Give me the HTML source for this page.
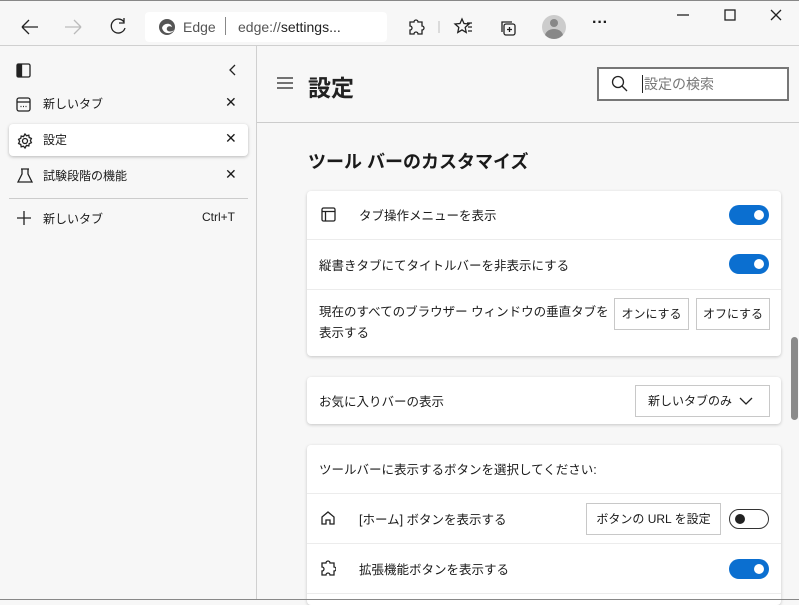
<!DOCTYPE html>
<html><head><meta charset="utf-8"><style>
*{box-sizing:border-box;margin:0;padding:0}
body{width:799px;height:600px;overflow:hidden;background:#f7f7f7;font-family:"Liberation Sans","Noto Sans CJK JP",sans-serif;color:#1a1a1a;position:relative;font-size:13px}
.abs{position:absolute}
.top{left:0;top:0;width:799px;height:46px;background:#f7f7f7;border-top:1px solid #888;border-bottom:1px solid #d0d0d0}
.addr{left:145px;top:12px;width:242px;height:30px;background:#fff;border-radius:4px}
.side{left:0;top:46px;width:257px;height:554px;background:#f7f7f7;border-right:1px solid #d0d0d0}
.si{position:absolute;left:0;width:257px;height:32px;font-size:12px}
.si .t{position:absolute;left:43px;top:7px}
.si .x{position:absolute;left:225px;top:6px;font-size:14px}
.card{position:absolute;left:307px;width:474px;background:#fff;border-radius:4px;box-shadow:0 1px 3px rgba(0,0,0,.2)}
.row{position:relative;border-top:1px solid #ececec}
.tg{position:absolute;width:40px;height:20px;border-radius:10px;background:#0b6fd0}
.tg::after{content:"";position:absolute;right:5px;top:5px;width:10px;height:10px;border-radius:50%;background:#fff}
.tg.off{background:#fff;border:1px solid #333}
.tg.off::after{left:5px;right:auto;top:4px;background:#222}
.btn{position:absolute;border:1px solid #c8c8c8;background:#fff;height:32px;font-size:12px;text-align:center;line-height:30px;white-space:nowrap}
.lbl{position:absolute;font-size:12.5px}
</style></head><body>
<div class="abs top"></div>
<svg class="abs" style="left:0;top:0" width="799" height="46" fill="none" stroke="#222" stroke-width="1.3">
<path d="M22 27h16M22 27l7-7M22 27l7 7"/>
<path d="M65 27h16M81 27l-7-7M81 27l-7 7" stroke="#bbb"/>
<path d="M124 22a7 7 0 1 0 1 6M124 18v5h-5"/>
<path d="M372 19l2.5 5 5.5.7-4 3.8 1 5.5-5-2.7-5 2.7 1-5.5-4-3.8 5.5-.7z"/>
<circle cx="369" cy="31" r="4" fill="#555" stroke="#fff"/>
<path d="M410 22h4a2 2 0 0 1 4 0h4v4a2 2 0 0 1 0 4v4h-4a2 2 0 0 0-4 0h-4v-4a2 2 0 0 0 0-4z"/>
<path d="M439 21v12" stroke="#ccc"/>
<path d="M462 19l2 4.5 5 .5-3.8 3.4 1 5-4.2-2.5-4.2 2.5 1-5-3.8-3.4 5-.5z M467 23h5M468 27h4M468 31h4"/>
<rect x="504" y="24" width="11" height="11" rx="2"/><path d="M502 32V22h10M509.5 27v5M507 29.5h5"/>
<path d="M677 15h12"/><rect x="725" y="10" width="10" height="10"/><path d="M771 10l10 10M781 10l-10 10"/>
</svg>
<div class="abs addr"></div>
<svg class="abs" style="left:158px;top:18px" width="18" height="18" viewBox="0 0 18 18"><circle cx="9" cy="9" r="8" fill="#555"/><path d="M4 10c1-5 9-6 10-1-3-2-6 0-5 3 1 2 5 2 7 0-2 4-10 5-12-2z" fill="#fff"/></svg>
<div class="abs" style="left:183px;top:19px;color:#555;font-size:14px">Edge</div>
<div class="abs" style="left:225px;top:17px;width:1px;height:18px;background:#888"></div>
<div class="abs" style="left:238px;top:19px;color:#555;font-size:14px">edge://<span style="color:#222">settings...</span></div>
<div class="abs" style="left:542px;top:15px;width:24px;height:24px;border-radius:50%;background:#ccc;overflow:hidden"><div class="abs" style="left:8px;top:4px;width:8px;height:8px;border-radius:50%;background:#888"></div><div class="abs" style="left:3px;top:14px;width:18px;height:14px;border-radius:50%;background:#888"></div></div>
<div class="abs" style="left:592px;top:14px;font-size:16px;font-weight:bold">···</div>

<div class="abs side"></div>
<div class="si" style="top:88px"><span class="t">新しいタブ</span><span class="x">✕</span></div>
<div class="si" style="top:124px;left:9px;width:239px;background:#fff;border-radius:4px;box-shadow:0 1px 3px rgba(0,0,0,.25)"><span class="t" style="left:34px">設定</span><span class="x" style="left:216px">✕</span></div>
<div class="si" style="top:160px"><span class="t">試験段階の機能</span><span class="x">✕</span></div>
<div class="abs" style="left:9px;top:198px;width:239px;height:1px;background:#ccc"></div>
<div class="si" style="top:203px"><span class="t">新しいタブ</span><span class="t" style="left:202px">Ctrl+T</span></div>
<svg class="abs" style="left:0;top:46px" width="257" height="200" fill="none" stroke="#222" stroke-width="1.3">
<rect x="17" y="18" width="13" height="13" rx="1.5"/><rect x="17.5" y="18.5" width="4" height="12" fill="#222"/>
<path d="M235 19l-5 5 5 5"/>
<rect x="17" y="52" width="13" height="13" rx="2"/><path d="M17 56h13"/><path d="M20.5 60.5h1M23 60.5h1M25.5 60.5h1"/>
<circle cx="25" cy="95" r="2.5"/><path d="M25 88l1.5 1.8 2.3-.6.4 2.3 2.2 1-1 2.1 1 2.1-2.2 1-.4 2.3-2.3-.6L25 102l-1.5-1.8-2.3.6-.4-2.3-2.2-1 1-2.1-1-2.1 2.2-1 .4-2.3 2.3.6z"/>
<path d="M21 123h8M22 123v5l-4 8h14l-4-8v-5"/>
<path d="M17 172h14M24 165v14"/>
</svg>

<svg class="abs" style="left:276px;top:76px" width="18" height="14" stroke="#222" stroke-width="1.3"><path d="M1 2h16M1 7h16M1 12h16"/></svg>
<div class="abs" style="left:308px;top:69px;font-size:23px;font-weight:bold;color:#222">設定</div>
<div class="abs" style="left:597px;top:67px;width:192px;height:34px;border:2px solid #777;background:#fff"></div>
<svg class="abs" style="left:611px;top:75px" width="18" height="18" fill="none" stroke="#222" stroke-width="1.3"><circle cx="7" cy="7" r="5.5"/><path d="M11 11l5 5"/></svg>
<div class="abs" style="left:642px;top:75px;width:1px;height:18px;background:#222"></div>
<div class="abs" style="left:644px;top:74px;color:#777;font-size:14px">設定の検索</div>
<div class="abs" style="left:257px;top:122px;width:542px;height:1px;background:#ccc"></div>
<div class="abs" style="left:308px;top:148px;font-size:18px;font-weight:bold">ツール バーのカスタマイズ</div>

<div class="card" style="top:191px;height:165px">
 <svg class="abs" style="left:14px;top:16px" width="16" height="16" fill="none" stroke="#222" stroke-width="1.3"><rect x="1" y="1" width="13" height="13" rx="1.5"/><path d="M1 4.5h13M4.5 4.5v9.5"/></svg>
 <div class="lbl" style="left:52px;top:14px">タブ操作メニューを表示</div>
 <div class="tg" style="left:422px;top:14px"></div>
 <div class="row" style="position:absolute;top:48px;left:0;width:474px;height:50px">
  <div class="lbl" style="left:12px;top:15px">縦書きタブにてタイトルバーを非表示にする</div>
  <div class="tg" style="left:422px;top:14px"></div></div>
 <div class="row" style="position:absolute;top:98px;left:0;width:474px;height:67px">
  <div class="lbl" style="left:12px;top:12px;line-height:21px;width:298px">現在のすべてのブラウザー ウィンドウの垂直タブを表示する</div>
  <div class="btn" style="left:307px;top:8px;width:75px">オンにする</div>
  <div class="btn" style="left:389px;top:8px;width:74px">オフにする</div></div>
</div>

<div class="card" style="top:377px;height:47px">
 <div class="lbl" style="left:12px;top:14px">お気に入りバーの表示</div>
 <div class="btn" style="left:328px;top:8px;width:135px;text-align:left;padding-left:12px">新しいタブのみ<svg class="abs" style="left:103px;top:10px" width="14" height="10" fill="none" stroke="#222" stroke-width="1.3"><path d="M1 2l6 6 6-6"/></svg></div>
</div>

<div class="card" style="top:445px;height:160px">
 <div class="lbl" style="left:12px;top:14px">ツールバーに表示するボタンを選択してください:</div>
 <div class="row" style="position:absolute;top:48px;left:0;width:474px;height:50px">
  <svg class="abs" style="left:13px;top:16px" width="16" height="16" fill="none" stroke="#222" stroke-width="1.3"><path d="M2 7l6-5 6 5v7h-4v-4H6v4H2z"/></svg>
  <div class="lbl" style="left:52px;top:15px">[ホーム] ボタンを表示する</div>
  <div class="btn" style="left:279px;top:9px;width:135px">ボタンの URL を設定</div>
  <div class="tg off" style="left:422px;top:15px"></div></div>
 <div class="row" style="position:absolute;top:98px;left:0;width:474px;height:50px">
  <svg class="abs" style="left:13px;top:16px" width="16" height="16" fill="none" stroke="#222" stroke-width="1.3"><path d="M2 3h4a2 2 0 0 1 4 0h4v4a2 2 0 0 1 0 4v4h-4a2 2 0 0 0-4 0H2v-4a2 2 0 0 0 0-4z"/></svg>
  <div class="lbl" style="left:52px;top:15px">拡張機能ボタンを表示する</div>
  <div class="tg" style="left:422px;top:15px"></div></div>
 <div class="row" style="position:absolute;top:148px;left:0;width:474px;height:12px"></div>
</div>
<div class="abs" style="left:791px;top:337px;width:7px;height:83px;border-radius:4px;background:#8a8a8a"></div>
<div class="abs" style="left:0;top:599px;width:799px;height:1px;background:#888"></div>
</body></html>
